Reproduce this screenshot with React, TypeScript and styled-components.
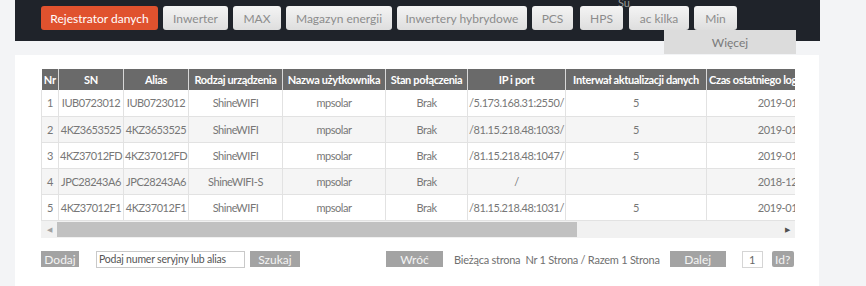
import React from "react";
import styled, { createGlobalStyle } from "styled-components";

const Global = createGlobalStyle`
  html, body { margin: 0; padding: 0; background: #f3f4f6; }
  body { font-family: "Lato", "Open Sans", "Liberation Sans", sans-serif; }
  * { box-sizing: border-box; }
`;

const Page = styled.div`
  padding-left: 15px;
  width: 820px;
`;

const TopBar = styled.div`
  position: relative;
  height: 41px;
  background: #1f232a;
  padding: 6px 0 0 26px;
  display: flex;
  align-items: flex-start;
`;

const Tab = styled.div<{ $w: number; $active?: boolean; $gap?: number }>`
  position: relative;
  z-index: 2;
  flex-shrink: 0;
  width: ${(p) => p.$w}px;
  height: 24px;
  margin-right: ${(p) => (p.$gap ?? 5)}px;
  border-radius: 3px;
  display: flex;
  align-items: center;
  justify-content: center;
  font-size: 12px;
  white-space: nowrap;
  color: ${(p) => (p.$active ? "#ffffff" : "#8c8c8c")};
  background: ${(p) =>
    p.$active ? "#e0522e" : "linear-gradient(#f4f4f4, #dedede)"};
`;

const HiddenLabel = styled.span`
  position: absolute;
  left: 603px;
  top: -4px;
  z-index: 1;
  font-size: 11px;
  color: #9a9a9a;
`;

const MoreMenu = styled.div`
  position: absolute;
  z-index: 3;
  left: 649px;
  top: 30px;
  width: 132px;
  height: 24px;
  background: #dcdcdc;
  color: #7a7a7a;
  font-size: 12px;
  display: flex;
  align-items: center;
  justify-content: center;
`;

const Card = styled.div`
  margin-top: 14px;
  width: 804px;
  height: 240px;
  background: #ffffff;
  padding: 14px 0 0 26px;
`;

const TableWrap = styled.div`
  width: 754px;
  overflow: hidden;
`;

const Table = styled.table`
  border-collapse: collapse;
  table-layout: fixed;
  width: 865px;
  font-size: 11px;
`;

const Th = styled.th<{ $left?: boolean }>`
  height: 21px;
  padding: 0 2px;
  background: #6a6a6a;
  color: #ffffff;
  font-weight: 700;
  letter-spacing: -0.35px;
  white-space: nowrap;
  overflow: hidden;
  text-align: ${(p) => (p.$left ? "left" : "center")};
  border-right: 1px solid #d8d8d8;
`;

const Tr = styled.tr<{ $alt?: boolean }>`
  background: ${(p) => (p.$alt ? "#f5f5f5" : "#ffffff")};
`;

const Td = styled.td`
  height: 26px;
  padding: 0 1px;
  color: #777777;
  text-align: center;
  white-space: nowrap;
  overflow: hidden;
  letter-spacing: -0.45px;
  border: 1px solid #e2e2e2;
  border-top: none;
`;

const Scrollbar = styled.div`
  width: 754px;
  height: 17px;
  background: #f1f1f1;
  display: flex;
  align-items: stretch;
`;

const Arrow = styled.div<{ $dark?: boolean }>`
  width: 16px;
  flex-shrink: 0;
  display: flex;
  align-items: center;
  justify-content: center;
  font-size: 7px;
  color: ${(p) => (p.$dark ? "#505050" : "#a3a3a3")};
`;

const Thumb = styled.div`
  width: 520px;
  flex-shrink: 0;
  margin: 1px 0;
  background: #c1c1c1;
`;

const Spacer = styled.div`
  flex: 1;
`;

const Controls = styled.div`
  margin-top: 13px;
  display: flex;
  align-items: center;
  height: 17px;
  width: 754px;
`;

const GrayButton = styled.div<{ $w: number; $ml?: number; $round?: boolean }>`
  flex-shrink: 0;
  width: ${(p) => p.$w}px;
  height: 16px;
  margin-left: ${(p) => p.$ml ?? 0}px;
  background: #a3a3a3;
  color: #f4f4f4;
  font-size: 12px;
  border-radius: ${(p) => (p.$round ? "2px" : "0")};
  display: flex;
  align-items: center;
  justify-content: center;
`;

const SearchInput = styled.input`
  flex-shrink: 0;
  width: 149px;
  height: 17px;
  margin-left: 17px;
  border: 1px solid #c9c9c9;
  padding: 0 2px;
  font-family: inherit;
  font-size: 10.5px;
  letter-spacing: -0.2px;
  color: #555;
  outline: none;
  &::placeholder { color: #555; }
`;

const PageInfo = styled.span`
  flex-shrink: 0;
  margin-left: 11px;
  font-size: 11px;
  letter-spacing: -0.25px;
  color: #707070;
  white-space: nowrap;
`;

const PageInput = styled.div`
  flex-shrink: 0;
  width: 21px;
  height: 17px;
  margin-left: 16px;
  border: 1px solid #d5d5d5;
  color: #666;
  font-size: 11px;
  display: flex;
  align-items: center;
  justify-content: center;
`;

const tabs: { label: string; w: number; gap?: number; active?: boolean }[] = [
  { label: "Rejestrator danych", w: 117, active: true },
  { label: "Inwerter", w: 65 },
  { label: "MAX", w: 48 },
  { label: "Magazyn energii", w: 106 },
  { label: "Inwertery hybrydowe", w: 130 },
  { label: "PCS", w: 41, gap: 7 },
  { label: "HPS", w: 43, gap: 6 },
  { label: "ac kilka", w: 60 },
  { label: "Min", w: 43 },
];

const cols: { label: string; w: number }[] = [
  { label: "Nr", w: 17 },
  { label: "SN", w: 65 },
  { label: "Alias", w: 65 },
  { label: "Rodzaj urządzenia", w: 94 },
  { label: "Nazwa użytkownika", w: 103 },
  { label: "Stan połączenia", w: 82 },
  { label: "IP i port", w: 98 },
  { label: "Interwał aktualizacji danych", w: 141 },
  { label: "Czas ostatniego logowania", w: 200 },
];

const rows = [
  ["1", "IUB0723012", "IUB0723012", "ShineWIFI", "mpsolar", "Brak", "/5.173.168.31:2550/", "5", "2019-01-04 10:21:33"],
  ["2", "4KZ3653525", "4KZ3653525", "ShineWIFI", "mpsolar", "Brak", "/81.15.218.48:1033/", "5", "2019-01-04 10:18:07"],
  ["3", "4KZ37012FD", "4KZ37012FD", "ShineWIFI", "mpsolar", "Brak", "/81.15.218.48:1047/", "5", "2019-01-04 10:19:52"],
  ["4", "JPC28243A6", "JPC28243A6", "ShineWIFI-S", "mpsolar", "Brak", "/", "", "2018-12-28 14:02:11"],
  ["5", "4KZ37012F1", "4KZ37012F1", "ShineWIFI", "mpsolar", "Brak", "/81.15.218.48:1031/", "5", "2019-01-04 10:20:45"],
];

export default function App() {
  return (
    <Page>
      <Global />
      <TopBar>
        <HiddenLabel>Su</HiddenLabel>
        {tabs.map((t) => (
          <Tab key={t.label} $w={t.w} $gap={t.gap} $active={t.active}>
            {t.label}
          </Tab>
        ))}
        <MoreMenu>Więcej</MoreMenu>
      </TopBar>
      <Card>
        <TableWrap>
          <Table>
            <colgroup>
              {cols.map((c) => (
                <col key={c.label} style={{ width: c.w }} />
              ))}
            </colgroup>
            <thead>
              <tr>
                {cols.map((c, i) => (
                  <Th key={c.label} $left={i === cols.length - 1}>
                    {c.label}
                  </Th>
                ))}
              </tr>
            </thead>
            <tbody>
              {rows.map((r, ri) => (
                <Tr key={ri} $alt={ri % 2 === 1}>
                  {r.map((v, ci) => (
                    <Td key={ci}>{v}</Td>
                  ))}
                </Tr>
              ))}
            </tbody>
          </Table>
        </TableWrap>
        <Scrollbar>
          <Arrow>◀</Arrow>
          <Thumb />
          <Spacer />
          <Arrow $dark>▶</Arrow>
        </Scrollbar>
        <Controls>
          <GrayButton $w={38}>Dodaj</GrayButton>
          <SearchInput placeholder="Podaj numer seryjny lub alias" />
          <GrayButton $w={50} $ml={5}>Szukaj</GrayButton>
          <GrayButton $w={57} $ml={86}>Wróć</GrayButton>
          <PageInfo>Bieżąca strona&nbsp; Nr 1 Strona / Razem 1 Strona</PageInfo>
          <GrayButton $w={56} $ml={10}>Dalej</GrayButton>
          <PageInput>1</PageInput>
          <GrayButton $w={22} $ml={9} $round>Id?</GrayButton>
        </Controls>
      </Card>
    </Page>
  );
}
